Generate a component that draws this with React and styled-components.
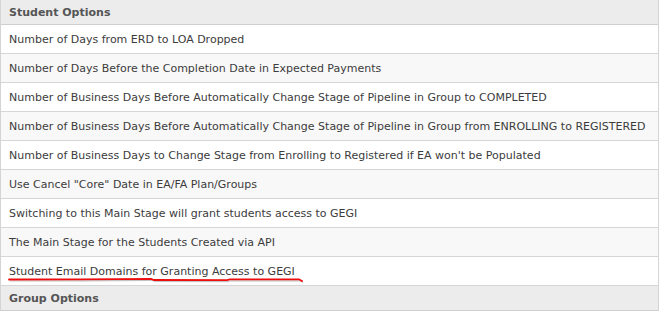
import React from 'react';
import styled, { createGlobalStyle } from 'styled-components';

const GlobalStyle = createGlobalStyle`
  html, body {
    margin: 0;
    padding: 0;
    background: #fff;
  }
`;

const Table = styled.div`
  width: 659px;
  border-left: 1px solid #d4d4d4;
  border-right: 1px solid #d4d4d4;
  box-sizing: border-box;
  font-family: "DejaVu Sans", Verdana, sans-serif;
  font-size: 11px;
  color: #3c3c3c;
`;

const SectionHeader = styled.div`
  height: 24px;
  display: flex;
  align-items: center;
  padding: 0 8px;
  background: #ececec;
  border-bottom: 1px solid #cfcfcf;
  font-weight: bold;
  color: #555;
`;

const Row = styled.div`
  position: relative;
  height: 28px;
  display: flex;
  align-items: center;
  padding: 0 8px;
  background: ${p => (p.$alt ? '#f8f8f8' : '#fff')};
  border-bottom: 1px solid #d6d6d6;
  white-space: nowrap;
`;

const Underline = styled.svg`
  position: absolute;
  left: 0;
  top: 0;
  pointer-events: none;
`;

const studentOptions = [
  'Number of Days from ERD to LOA Dropped',
  'Number of Days Before the Completion Date in Expected Payments',
  'Number of Business Days Before Automatically Change Stage of Pipeline in Group to COMPLETED',
  'Number of Business Days Before Automatically Change Stage of Pipeline in Group from ENROLLING to REGISTERED',
  "Number of Business Days to Change Stage from Enrolling to Registered if EA won't be Populated",
  'Use Cancel "Core" Date in EA/FA Plan/Groups',
  'Switching to this Main Stage will grant students access to GEGI',
  'The Main Stage for the Students Created via API',
  'Student Email Domains for Granting Access to GEGI',
];

const markerPath =
  'M8 22.5 L80 22.3 L150 21.8 L153 23 L226 23.2 L229 22.3 L298 22.3 L301 24';

// red marker stroke under the highlighted option
const Marker = () => (
  <Underline width="310" height="28" viewBox="0 0 310 28">
    <path d={markerPath} fill="none" stroke="#c4c4c4" strokeWidth="1.2" transform="translate(1 1.5)" />
    <path d={markerPath} fill="none" stroke="#ee0d0d" strokeWidth="1.8" strokeLinecap="round" />
  </Underline>
);

export default function App() {
  return (
    <>
      <GlobalStyle />
      <Table>
        <SectionHeader>Student Options</SectionHeader>
        {studentOptions.map((label, i) => (
          <Row key={label} $alt={i % 2 === 1}>
            {label}
            {i === studentOptions.length - 1 && <Marker />}
          </Row>
        ))}
        <SectionHeader>Group Options</SectionHeader>
      </Table>
    </>
  );
}
